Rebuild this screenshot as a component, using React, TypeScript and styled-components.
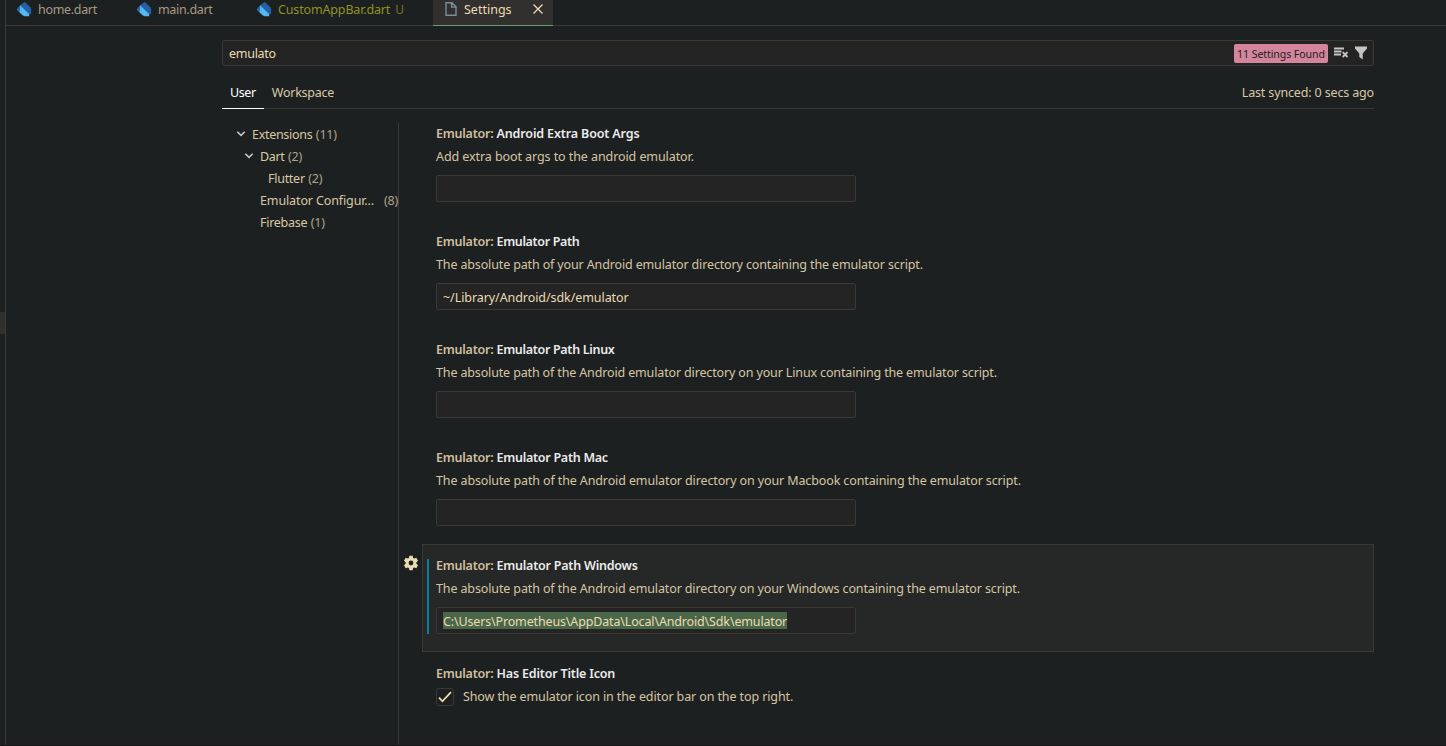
import React from "react";
import styled, { createGlobalStyle } from "styled-components";

const Global = createGlobalStyle`
  * { box-sizing: border-box; }
  html, body { margin: 0; background: #1d2021; }
  body {
    font-family: "Noto Sans", "Open Sans", sans-serif;
    font-size: 12.5px;
    color: #d8c8a5;
    overflow: hidden;
  }
`;

const Window = styled.div`
  display: flex;
  width: 1446px;
  height: 746px;
  overflow: hidden;
  border-bottom: 1px solid #1b141b;
`;

const SideEdge = styled.div`
  flex: none;
  width: 6px;
  padding-top: 312px;
  border-right: 1px solid #3c3836;
`;

const SideSelection = styled.div`
  height: 22px;
  background: #32302f;
`;

const Editor = styled.main`
  flex: 1;
  min-width: 0;
  display: flex;
  flex-direction: column;
`;

const TabBar = styled.div`
  display: flex;
  flex: none;
  height: 26px;
  border-bottom: 1px solid #3c3836;
`;

const Tab = styled.div<{ $width: number; $active?: boolean; $color?: string }>`
  display: flex;
  align-items: center;
  gap: 6px;
  width: ${(p) => p.$width}px;
  height: ${(p) => (p.$active ? 26 : 25)}px;
  padding: 0 0 7px 11px;
  white-space: nowrap;
  color: ${(p) => p.$color ?? "#a89984"};
  background: ${(p) => (p.$active ? "#32302f" : "transparent")};
  border-bottom: ${(p) => (p.$active ? "1px solid #689d6a" : "none")};
  & > svg { flex: none; }
`;

const Txt = styled.span<{ $track?: number }>`
  letter-spacing: ${(p) => p.$track ?? 0}px;
  white-space: pre;
`;

const TabStatus = styled.span`
  margin-left: -1px;
  font-size: 12px;
  opacity: 0.75;
`;

const CloseIcon = styled.svg`
  margin-left: 12px;
`;

const Page = styled.div`
  display: flex;
  flex-direction: column;
  flex: 1;
  width: 1152px;
  margin-left: 216px;
  padding-top: 14px;
`;

const SearchBox = styled.div`
  display: flex;
  align-items: center;
  gap: 4px;
  height: 26px;
  padding: 0 4px 0 6px;
  background: #222322;
  border: 1px solid #3c3836;
  border-radius: 2px;
  color: #ebdbb2;
`;

const Badge = styled.span`
  display: flex;
  align-items: center;
  justify-content: center;
  width: 94px;
  height: 19px;
  margin: 1px 1px 0 auto;
  border-radius: 2px;
  background: #d3869b;
  color: #1d2021;
  font-size: 10.6px;
`;

const ScopeBar = styled.div`
  display: flex;
  height: 43px;
  padding-top: 10px;
  border-bottom: 1px solid #3c3836;
`;

const Scope = styled.div<{ $active?: boolean }>`
  height: 33px;
  padding: 0 8px;
  line-height: 33px;
  color: ${(p) => (p.$active ? "#ffffff" : "#d8c8a5")};
  border-bottom: ${(p) => (p.$active ? "1px solid #ffffff" : "none")};
`;

const Synced = styled.div`
  margin-left: auto;
  line-height: 33px;
`;

const Columns = styled.div`
  display: flex;
  flex: 1;
`;

const Toc = styled.nav`
  flex: none;
  width: 177px;
  margin-top: 14px;
  border-right: 1px solid #3c3836;
`;

const TocRow = styled.div<{ $depth: number }>`
  display: flex;
  align-items: center;
  height: 22px;
  padding-left: ${(p) => 10 + p.$depth * 8}px;
  white-space: nowrap;
`;

const Twistie = styled.span`
  display: flex;
  justify-content: center;
  width: 20px;
  padding-right: 3px;
`;

const Count = styled.span<{ $end?: boolean }>`
  margin-left: ${(p) => (p.$end ? "auto" : "3.5px")};
  letter-spacing: -0.2px;
  color: #b0a386;
`;

const List = styled.div`
  flex: 1;
  padding-top: 3px;
`;

const Item = styled.div`
  display: flex;
  height: 108px;
`;

const Gutter = styled.div`
  flex: none;
  width: 23px;
  padding: 11px 0 0 4px;
`;

const Card = styled.section<{ $focused?: boolean }>`
  flex: 1;
  display: flex;
  padding-left: 4px;
  border: 1px solid ${(p) => (p.$focused ? "#3c3836" : "transparent")};
  background: ${(p) => (p.$focused ? "#262727" : "transparent")};
`;

const Modified = styled.div<{ $on?: boolean }>`
  width: 2px;
  height: 75px;
  margin: 14px 7px 0 0;
  background: ${(p) => (p.$on ? "#0c7d9d" : "transparent")};
`;

const Content = styled.div`
  padding-top: 10px;
`;

const Title = styled.h3`
  margin: 0;
  height: 21px;
  font-size: 12.5px;
  line-height: 21px;
  font-weight: 600;
  color: #cfbf9d;
  white-space: pre;
  & b { font-weight: 600; color: #ebebeb; }
`;

const Description = styled.p`
  margin: 0;
  height: 25px;
  line-height: 25px;
  white-space: nowrap;
  color: #d5c5a3;
`;

const Field = styled.div`
  display: flex;
  align-items: center;
  width: 420px;
  height: 27px;
  margin-top: 6px;
  padding: 1px 6px 0;
  background: #232423;
  border: 1px solid #3c3836;
  border-radius: 2px;
  color: #ebdbb2;
`;

const Selected = styled.span`
  height: 17px;
  margin-top: -1px;
  line-height: 19px;
  background: #4b6749;
`;

const CheckRow = styled.label`
  display: flex;
  align-items: center;
  gap: 9px;
  height: 25px;
  color: #d5c5a3;
`;

const CheckBox = styled.span`
  display: flex;
  width: 18px;
  height: 18px;
  margin-top: 1px;
  align-items: center;
  justify-content: center;
  background: #1d2021;
  border: 1px solid #3c3836;
  border-radius: 3px;
`;

const DartIcon = () => (
  <svg width="15" height="15" viewBox="0 0 15 15">
    <path d="M3.4 3.2 6.8.6q1-.6 1.9.2l4.6 4.5.8 1.6v5.2h-2z" fill="#2460a7" />
    <path d="M3.3 3.2 12.2 12v2.2H7.4L5.3 13 .6 8.6q-.7-.8-.2-1.7z" fill="#55b8f5" />
    <path d="M3.3 3.2 2.6 9.9.8 8.5q-.9-.8-.4-1.8z" fill="#2460a7" />
  </svg>
);

const FileIcon = () => (
  <svg width="14" height="16" viewBox="0 0 14 16" fill="none" stroke="#798d97" strokeWidth="1.4">
    <path d="M2 1.7h6l4 4v8.6H2zM7.6 1.7v4.4H12" />
  </svg>
);

const ClearIcon = () => (
  <svg width="16" height="16" viewBox="0 0 16 16" fill="none" stroke="#c5c5c5">
    <path d="M1 3.5h10M1 6.5h7.5M1 9.5h7" strokeWidth="1.8" />
    <path d="m9.7 7.2 4.8 4.8m0-4.8L9.700 12" strokeWidth="1.9" />
  </svg>
);

const FilterIcon = () => (
  <svg width="16" height="16" viewBox="0 0 16 16">
    <path d="M2 1.600h12v1.800L9.700 8.500v5.900L6.300 12V8.500L2 3.400z" fill="#c5c5c5" />
  </svg>
);

const GearIcon = () => (
  <svg width="16" height="16" viewBox="0 0 16 16">
    <path
      fillRule="evenodd"
      fill="#ebdbb2"
      d="M6.3.8h3.4l.4 2.1 1.2.7 2-.8 1.7 3-1.6 1.4v1.6l1.6 1.4-1.7 3-2-.8-1.2.7-.4 2.1H6.3l-.4-2.1-1.2-.7-2 .8-1.7-3 1.6-1.4V7.2L1 5.8l1.7-3 2 .8 1.2-.7zM8 5.6a2.4 2.4 0 1 0 0 4.8 2.4 2.4 0 0 0 0-4.8z"
    />
  </svg>
);

const Chevron = () => (
  <svg width="10" height="8" viewBox="0 0 10 8" fill="none" stroke="#c5c5c5" strokeWidth="1.6">
    <path d="m1.3 1.7 3.7 3.7 3.7-3.7" />
  </svg>
);

type Setting = {
  name: string;
  nameTrack: number;
  text: string;
  track: number;
  value?: string;
  valueTrack?: number;
  focused?: boolean;
  checkbox?: boolean;
};

const settings: Setting[] = [
  {
    name: "Android Extra Boot Args",
    nameTrack: -0.14,
    text: "Add extra boot args to the android emulator.",
    track: -0.08,
  },
  {
    name: "Emulator Path",
    nameTrack: -0.35,
    text: "The absolute path of your Android emulator directory containing the emulator script.",
    track: -0.14,
    value: "~/Library/Android/sdk/emulator",
    valueTrack: -0.07,
  },
  {
    name: "Emulator Path Linux",
    nameTrack: -0.31,
    text: "The absolute path of the Android emulator directory on your Linux containing the emulator script.",
    track: -0.143,
  },
  {
    name: "Emulator Path Mac",
    nameTrack: -0.26,
    text: "The absolute path of the Android emulator directory on your Macbook containing the emulator script.",
    track: -0.12,
  },
  {
    name: "Emulator Path Windows",
    nameTrack: -0.22,
    text: "The absolute path of the Android emulator directory on your Windows containing the emulator script.",
    track: -0.125,
    value: "C:\\Users\\Prometheus\\AppData\\Local\\Android\\Sdk\\emulator",
    valueTrack: -0.15,
    focused: true,
  },
  {
    name: "Has Editor Title Icon",
    nameTrack: -0.18,
    text: "Show the emulator icon in the editor bar on the top right.",
    track: -0.11,
    checkbox: true,
  },
];

const SettingItem = ({ s }: { s: Setting }) => (
  <Item>
    <Gutter>{s.focused && <GearIcon />}</Gutter>
    <Card $focused={s.focused}>
      <Modified $on={s.focused} />
      <Content>
        <Title>
          <Txt $track={-0.22}>Emulator: </Txt>
          <b><Txt $track={s.nameTrack}>{s.name}</Txt></b>
        </Title>
        {s.checkbox ? (
          <CheckRow>
            <CheckBox>
              <svg width="16" height="16" viewBox="0 0 16 16" fill="none" stroke="#ebdbb2" strokeWidth="1.8">
                <path d="m2 8.7 3.4 3.6L14 3.2" />
              </svg>
            </CheckBox>
            <Txt $track={s.track}>{s.text}</Txt>
          </CheckRow>
        ) : (
          <>
            <Description><Txt $track={s.track}>{s.text}</Txt></Description>
            <Field>
              {s.focused ? (
                <Selected><Txt $track={s.valueTrack}>{s.value}</Txt></Selected>
              ) : (
                <Txt $track={s.valueTrack}>{s.value}</Txt>
              )}
            </Field>
          </>
        )}
      </Content>
    </Card>
  </Item>
);

export default function App() {
  return (
    <>
      <Global />
      <Window>
        <SideEdge><SideSelection /></SideEdge>
        <Editor>
          <TabBar>
            <Tab $width={120}><DartIcon /><Txt $track={-0.32}>home.dart</Txt></Tab>
            <Tab $width={120}><DartIcon /><Txt $track={-0.32}>main.dart</Txt></Tab>
            <Tab $width={187} $color="#8f9321">
              <DartIcon /><Txt $track={-0.15}>CustomAppBar.dart</Txt><TabStatus>U</TabStatus>
            </Tab>
            <Tab $width={120} $active $color="#ebdbb2">
              <FileIcon /><Txt>Settings</Txt>
              <CloseIcon width="16" height="16" viewBox="0 0 16 16" fill="none" stroke="#ebdbb2" strokeWidth="1.3">
                <path d="m3.5 3.5 9 9m0-9-9 9" />
              </CloseIcon>
            </Tab>
          </TabBar>
          <Page>
            <SearchBox>
              <Txt $track={-0.27}>emulato</Txt>
              <Badge><Txt $track={-0.1}>11 Settings Found</Txt></Badge>
              <ClearIcon />
              <FilterIcon />
            </SearchBox>
            <ScopeBar>
              <Scope $active><Txt $track={-0.4}>User</Txt></Scope>
              <Scope><Txt $track={-0.24}>Workspace</Txt></Scope>
              <Synced><Txt $track={-0.15}>Last synced: 0 secs ago</Txt></Synced>
            </ScopeBar>
            <Columns>
              <Toc>
                <TocRow $depth={0}><Twistie><Chevron /></Twistie><Txt $track={-0.3}>Extensions</Txt><Count>(11)</Count></TocRow>
                <TocRow $depth={1}><Twistie><Chevron /></Twistie><Txt $track={-0.35}>Dart</Txt><Count>(2)</Count></TocRow>
                <TocRow $depth={2}><Twistie /><Txt $track={-0.27}>Flutter</Txt><Count>(2)</Count></TocRow>
                <TocRow $depth={1}><Twistie /><Txt $track={-0.12}>Emulator Configur...</Txt><Count $end>(8)</Count></TocRow>
                <TocRow $depth={1}><Twistie /><Txt $track={-0.27}>Firebase</Txt><Count>(1)</Count></TocRow>
              </Toc>
              <List>
                {settings.map((s) => <SettingItem key={s.name} s={s} />)}
              </List>
            </Columns>
          </Page>
        </Editor>
      </Window>
    </>
  );
}
